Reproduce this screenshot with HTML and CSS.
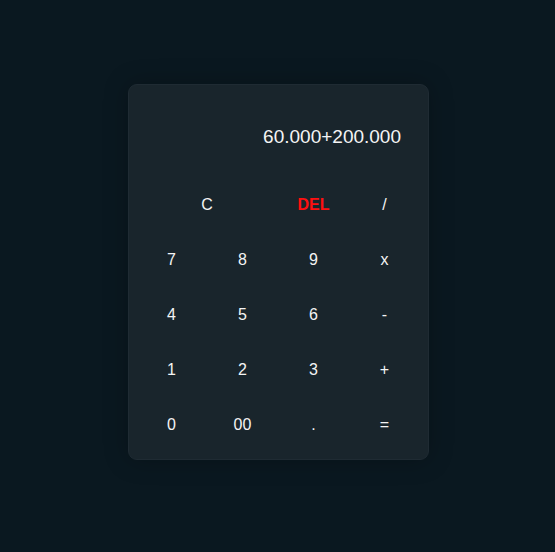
FILE: index.html
```html
<!DOCTYPE html>
<html>
<head>
<meta charset="utf-8">
<link rel="stylesheet" href="styles.css">
</head>
<body>
<div class="calc">
  <div class="display">60.000+200.000</div>
  <div class="keys">
    <button class="key span2">C</button>
    <button class="key del">DEL</button>
    <button class="key">/</button>
    <button class="key">7</button>
    <button class="key">8</button>
    <button class="key">9</button>
    <button class="key">x</button>
    <button class="key">4</button>
    <button class="key">5</button>
    <button class="key">6</button>
    <button class="key">-</button>
    <button class="key">1</button>
    <button class="key">2</button>
    <button class="key">3</button>
    <button class="key">+</button>
    <button class="key">0</button>
    <button class="key">00</button>
    <button class="key">.</button>
    <button class="key">=</button>
  </div>
</div>
</body>
</html>
```
FILE: styles.css
```css
html, body {
  margin: 0;
  height: 100%;
}
body {
  background: #0a1820;
  font-family: "Liberation Sans", Arial, sans-serif;
  display: flex;
  justify-content: center;
  padding-top: 84px;
  box-sizing: border-box;
}
.calc {
  box-sizing: border-box;
  width: 301px;
  height: 376px;
  margin-left: 2px;
  background: #19252c;
  border: 1px solid #1f2b33;
  border-radius: 9px;
  box-shadow: 0 0 24px rgba(0, 0, 0, 0.25);
  padding: 0 9px 7px 7px;
  display: flex;
  flex-direction: column;
}
.display {
  color: #f4f4f4;
  font-size: 19px;
  text-align: right;
  height: 92px;
  line-height: 104px;
  padding-right: 18px;
}
.keys {
  display: grid;
  grid-template-columns: repeat(4, 71px);
  grid-auto-rows: 55px;
}
.key {
  background: none;
  border: 0;
  color: #f4f4f4;
  font-family: "Liberation Sans", Arial, sans-serif;
  font-size: 16px;
  padding: 0;
  cursor: pointer;
}
.span2 {
  grid-column: span 2;
}
.del {
  color: #ff1010;
  font-weight: bold;
}
```
